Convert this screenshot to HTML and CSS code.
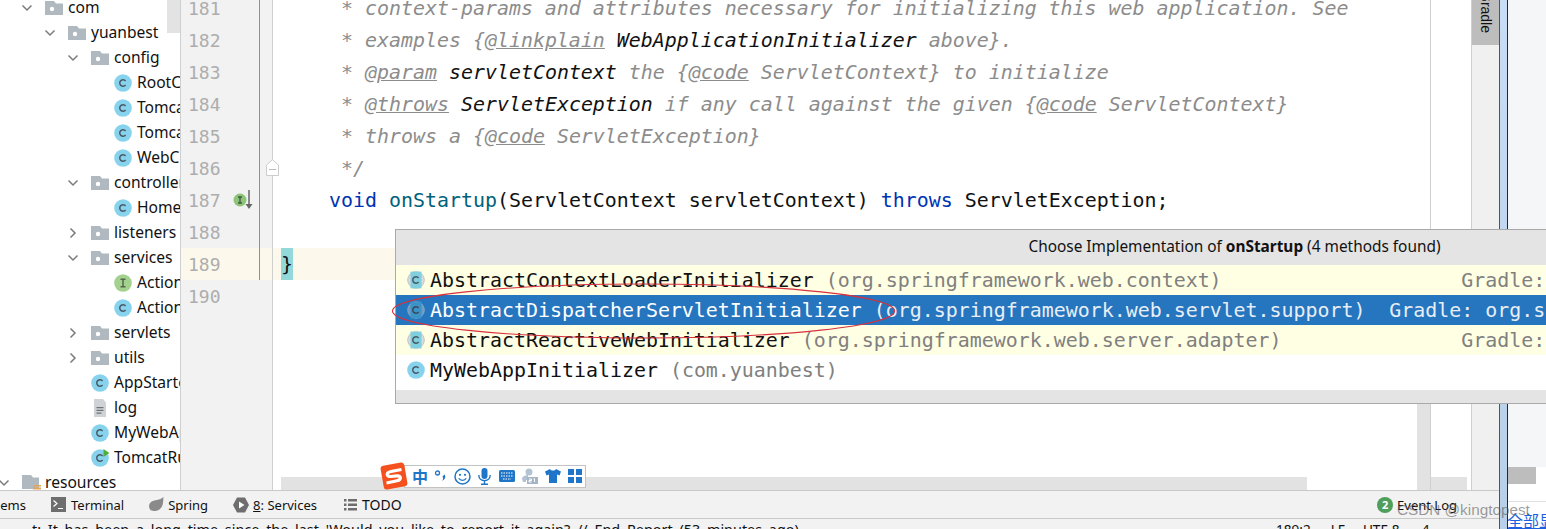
FILE: index.html
```html
<!DOCTYPE html>
<html lang="en">
<head>
<meta charset="utf-8">
<title>IDE</title>
<link rel="stylesheet" href="styles.css">
</head>
<body>
<svg class="defs" width="0" height="0" aria-hidden="true">
  <symbol id="down" viewBox="0 0 12 8"><path d="M1.500 1.500 6 6l4.500-4.500" fill="none" stroke="#7b7b7b" stroke-width="1.500"/></symbol>
  <symbol id="right" viewBox="0 0 8 12"><path d="M1.500 1.500 6 6l-4.500 4.500" fill="none" stroke="#7b7b7b" stroke-width="1.500"/></symbol>
  <symbol id="folder" viewBox="0 0 18 14"><path d="M0 0h9l2 2.500h7V14H0z" fill="#b0b9c0"/><circle cx="7" cy="8" r="2.200" fill="#fff"/></symbol>
  <symbol id="res" viewBox="0 0 19 16"><path d="M0 0h9l2 2.500h6V14H0z" fill="#b0b9c0"/><path d="M11 10h8v1.600h-8zM11 12.400h8V14h-8zM11 14.600h8V16h-8z" fill="#e5a55a"/></symbol>
  <symbol id="cls" viewBox="0 0 18 18"><circle cx="9" cy="9" r="8.800" fill="#87d3ee"/><path d="M11.600 6.900a3.300 3.300 0 1 0 0 4.200" fill="none" stroke="#4a5a66" stroke-width="1.500"/></symbol>
  <symbol id="lib" viewBox="0 0 18 18"><circle cx="9" cy="9" r="8.300" fill="#d8dde0" stroke="#c2c2c2"/><rect x="3.500" y="0.600" width="11" height="16.800" fill="#7fcfdf"/><path d="M11.600 6.900a3.300 3.300 0 1 0 0 4.200" fill="none" stroke="#4a5a66" stroke-width="1.500"/></symbol>
  <symbol id="libsel" viewBox="0 0 18 18"><circle cx="9" cy="9" r="8.300" fill="#6d9cc4" stroke="#8aa4bb"/><rect x="3.500" y="0.600" width="11" height="16.800" fill="#3b93c8"/><path d="M11.600 6.900a3.300 3.300 0 1 0 0 4.200" fill="none" stroke="#39495a" stroke-width="1.500"/></symbol>
  <symbol id="ifc" viewBox="0 0 18 18"><circle cx="9" cy="9" r="8.800" fill="#a3d28f"/><path d="M6.500 5.300h5M6.500 12.700h5M9 5.300v7.400" fill="none" stroke="#55654f" stroke-width="1.500"/></symbol>
</svg>
<div class="ide">
  <div class="main">
    <nav class="tree">
      <div class="tree-thumb"></div>
      <div class="row d0"><svg class="chev"><use href="#down"/></svg><svg class="fold"><use href="#folder"/></svg><span>com</span></div>
      <div class="row d1"><svg class="chev"><use href="#down"/></svg><svg class="fold"><use href="#folder"/></svg><span>yuanbest</span></div>
      <div class="row d2"><svg class="chev"><use href="#down"/></svg><svg class="fold"><use href="#folder"/></svg><span>config</span></div>
      <div class="row d3 leaf"><svg class="ci"><use href="#cls"/></svg><span>RootConfig</span></div>
      <div class="row d3 leaf"><svg class="ci"><use href="#cls"/></svg><span>TomcatConfig</span></div>
      <div class="row d3 leaf"><svg class="ci"><use href="#cls"/></svg><span>TomcatServer</span></div>
      <div class="row d3 leaf"><svg class="ci"><use href="#cls"/></svg><span>WebConfig</span></div>
      <div class="row d2"><svg class="chev"><use href="#down"/></svg><svg class="fold"><use href="#folder"/></svg><span>controllers</span></div>
      <div class="row d3 leaf"><svg class="ci"><use href="#cls"/></svg><span>HomeController</span></div>
      <div class="row d2"><svg class="chev chev-r"><use href="#right"/></svg><svg class="fold"><use href="#folder"/></svg><span>listeners</span></div>
      <div class="row d2"><svg class="chev"><use href="#down"/></svg><svg class="fold"><use href="#folder"/></svg><span>services</span></div>
      <div class="row d3 leaf"><svg class="ci"><use href="#ifc"/></svg><span>ActionService</span></div>
      <div class="row d3 leaf"><svg class="ci"><use href="#cls"/></svg><span>ActionServiceImpl</span></div>
      <div class="row d2"><svg class="chev chev-r"><use href="#right"/></svg><svg class="fold"><use href="#folder"/></svg><span>servlets</span></div>
      <div class="row d2"><svg class="chev chev-r"><use href="#right"/></svg><svg class="fold"><use href="#folder"/></svg><span>utils</span></div>
      <div class="row d2 leaf"><svg class="ci"><use href="#cls"/></svg><span>AppStarter</span></div>
      <div class="row d2 leaf"><svg class="ci" viewBox="0 0 18 18"><path d="M3 0h9l3 3.500V18H3z" fill="#d0d3d6"/><path d="M5.500 8h7v1.300h-7zM5.500 10.700h7V12h-7zM5.500 13.400h5v1.300h-5z" fill="#6c7378"/></svg><span>log</span></div>
      <div class="row d2 leaf"><svg class="ci"><use href="#cls"/></svg><span>MyWebAppInitializer</span></div>
      <div class="row d2 leaf"><svg class="ci" viewBox="0 0 18 18"><use href="#cls" width="18" height="18"/><path d="M12.500 0v8l6-4z" fill="#4fae3a"/></svg><span>TomcatRunner</span></div>
      <div class="row dm"><svg class="chev"><use href="#down"/></svg><svg class="fold fold-res"><use href="#res"/></svg><span>resources</span></div>
    </nav>
    <div class="gutter">
      <div class="gline"><div class="num">181</div></div>
      <div class="gline"><div class="num">182</div></div>
      <div class="gline"><div class="num">183</div></div>
      <div class="gline"><div class="num">184</div></div>
      <div class="gline"><div class="num">185</div></div>
      <div class="gline"><div class="num">186</div></div>
      <div class="gline"><div class="num">187</div></div>
      <div class="gline"><div class="num">188</div></div>
      <div class="gline cur"><div class="num">189</div></div>
      <div class="gline"><div class="num last">190</div></div>
      <svg class="impl" width="21" height="20" viewBox="0 0 21 20"><circle cx="7" cy="10" r="6.500" fill="#8cc57a"/><path d="M5 7h4M5 13h4M7 7v6" stroke="#45553f" stroke-width="1.300" fill="none"/><path d="M16 0v15" stroke="#666" stroke-width="1.500"/><path d="M12.500 14h7L16 19z" fill="#666"/></svg>
      <svg class="foldmark" width="13" height="17" viewBox="0 0 13 17"><path d="M.5 16.500V6L6.500.7 12.500 6v10.500z" fill="#fff" stroke="#ccc"/><path d="M3 10.500h7" stroke="#bbb"/></svg>
    </div>
    <div class="editor">
      <div class="code"><span class="doc">     * context-params and attributes necessary for initializing this web application. See</span></div>
      <div class="code"><span class="doc">     * examples {<span class="tag">@linkplain</span> </span><span class="ref">WebApplicationInitializer</span><span class="doc"> above}.</span></div>
      <div class="code"><span class="doc">     * <span class="tag">@param</span> </span><span class="ref">servletContext</span><span class="doc"> the {<span class="tag">@code</span> ServletContext} to initialize</span></div>
      <div class="code"><span class="doc">     * <span class="tag">@throws</span> </span><span class="ref">ServletException</span><span class="doc"> if any call against the given {<span class="tag">@code</span> ServletContext}</span></div>
      <div class="code"><span class="doc">     * throws a {<span class="tag">@code</span> ServletException}</span></div>
      <div class="code"><span class="doc">     */</span></div>
      <div class="code">    <span class="kw">void</span> <span class="fn">onStartup</span>(ServletContext servletContext) <span class="kw">throws</span> ServletException;</div>
      <div class="code"></div>
      <div class="code cur"><span class="brace">}</span></div>
      <div class="code"></div>
      <div class="hscroll"></div>
      <div class="vscroll"></div>
    </div>
    <div class="aux"><div class="aux-thumb"></div></div>
    <aside class="strip"><div class="gradle"><span>Gradle</span></div></aside>
  </div>
  <footer class="toolbar">
    <span class="tool cut">Problems</span>
    <span class="tool t-term"><svg width="15" height="15" viewBox="0 0 15 15"><rect width="15" height="15" fill="#6e6e6e"/><path d="M2.500 3.500 6 6.500l-3.500 3M7 11.500h5" fill="none" stroke="#fff" stroke-width="1.200"/></svg>Terminal</span>
    <span class="tool t-spring"><svg width="16" height="15" viewBox="0 0 16 15"><path d="M15.500 0C15 5 15.500 9 12 12c-3 2.500-7 2.500-9.500 1C1 11 0 8 3 5c3-2.500 9-1.500 12.500-5zM2 14c2-4 5-6 9-7.500" fill="#8a8a8a"/></svg>Spring</span>
    <span class="tool t-serv"><svg width="16" height="16" viewBox="0 0 16 16"><path d="M4 .5h8L16 8l-4 7.500H4L0 8z" fill="#6e6e6e"/><path d="M6 4.500v7l5.500-3.500z" fill="#fff"/></svg><span><u>8</u>: Services</span></span>
    <span class="tool t-todo"><svg width="13" height="12" viewBox="0 0 13 12"><path d="M0 0h2.500v2.500H0zM4 0h9v2.500H4zM0 4.500h2.500V7H0zM4 4.500h9V7H4zM0 9h2.500v2.500H0zM4 9h9v2.500H4z" fill="#6e6e6e"/></svg><span class="todo-label">TODO</span></span>
    <span class="tool t-log"><i class="badge">2</i>Event Log</span>
  </footer>
  <div class="status">
    <span class="msg">t: It has been a long time since the last 'Would you like to report it again? // End Report (53 minutes ago)</span>
    <span class="pos">189:2</span><span class="pos lf">LF</span><span class="pos utf">UTF-8</span><span class="pos ind">4</span>
  </div>
</div>
<div class="frame"></div>
<div class="far">
  <div class="far-top"></div>
  <div class="far-bar"><div class="far-thumb"></div></div>
  <div class="far-line"></div>
  <a class="far-link">全部显示</a>
</div>

<section class="popup">
  <header class="pop-head">Choose Implementation of <b>onStartup</b> (4 methods found)</header>
  <div class="item lib"><svg class="ci"><use href="#lib"/></svg><span class="name">AbstractContextLoaderInitializer</span> <span class="pkg">(org.springframework.web.context)</span><span class="loc">Gradle: org.springframework:spring-web:5.2.8</span></div>
  <div class="item sel"><svg class="ci"><use href="#libsel"/></svg><span class="name">AbstractDispatcherServletInitializer</span> <span class="pkg">(org.springframework.web.servlet.support)</span><span class="loc">Gradle: org.springframework:spring-webmvc:5.2.8.RC</span></div>
  <div class="item lib"><svg class="ci"><use href="#lib"/></svg><span class="name">AbstractReactiveWebInitializer</span> <span class="pkg">(org.springframework.web.server.adapter)</span><span class="loc">Gradle: org.springframework:spring-web:5.2.8</span></div>
  <div class="item"><svg class="ci"><use href="#cls"/></svg><span class="name">MyWebAppInitializer</span> <span class="pkg">(com.yuanbest)</span></div>
  <div class="pop-foot"></div>
</section>

<svg class="ring" width="510" height="62" viewBox="0 0 510 62"><ellipse cx="253.500" cy="31" rx="251" ry="27" fill="none" stroke="#d8303c" stroke-width="1.100"/></svg>

<div class="ime">
  <svg class="ime-logo" width="28" height="28" viewBox="0 0 28 28"><rect x="2" y="2" width="24" height="24" rx="3" fill="#f4511e" transform="rotate(-10 14 14)"/><path d="M21.500 7.500 11 9.500C6 10.500 6 14.500 10.500 14.500L17 13.800C21.500 13.500 21.500 17.800 17 18.800L6.500 21" fill="none" stroke="#fff" stroke-width="3.200"/></svg>
  <div class="ime-bar">
    <span class="ime-zh">中</span>
    <svg width="12" height="14" viewBox="0 0 12 14"><circle cx="2.500" cy="4" r="2" fill="none" stroke="#1f76c8" stroke-width="1.300"/><path d="M9.500 5.500c1.500 1.500 1 5-2.500 6.500 1.500-2 1.200-3 .5-4.500z" fill="#1f76c8"/></svg>
    <svg width="17" height="17" viewBox="0 0 17 17"><circle cx="8.500" cy="8.500" r="7.500" fill="none" stroke="#1f76c8" stroke-width="1.500"/><circle cx="6" cy="6.800" r="1.100" fill="#1f76c8"/><circle cx="11" cy="6.800" r="1.100" fill="#1f76c8"/><path d="M4.800 10.200c1.500 2.800 6 2.800 7.400 0" fill="none" stroke="#1f76c8" stroke-width="1.300"/></svg>
    <svg width="13" height="17" viewBox="0 0 13 17"><rect x="3.500" y="0" width="6" height="11" rx="3" fill="#1f76c8"/><path d="M.8 7c0 7.500 11.400 7.500 11.400 0M6.500 12.500V16M3 16.300h7" fill="none" stroke="#1f76c8" stroke-width="1.400"/></svg>
    <svg width="16" height="12" viewBox="0 0 16 12"><rect width="16" height="12" rx="1.500" fill="#1f76c8"/><path d="M2 3h12M2 6h12M4 9h8" stroke="#fff" stroke-width="1.200" stroke-dasharray="1.500 1"/></svg>
    <svg width="16" height="16" viewBox="0 0 16 16"><circle cx="7" cy="4" r="3.500" fill="#b4c3d3"/><path d="M0 11c0-3 4-4 6-4v5H4v2H1z" fill="#b4c3d3"/><rect x="5" y="9" width="11" height="7" fill="#a5b4c4"/><path d="M7 11h2.500v1.500H7V14h2.500M11.500 11l1-.5V14" fill="none" stroke="#fff"/></svg>
    <svg width="16" height="14" viewBox="0 0 16 14"><path d="M5 0 0 2.500l1.500 4L4 5.500V14h8V5.500l2.500 1 1.500-4L11 0C10 2 6 2 5 0z" fill="#1f76c8"/></svg>
    <svg width="14" height="14" viewBox="0 0 14 14"><path d="M0 0h6v6H0zM8 0h6v6H8zM0 8h6v6H0zM8 8h6v6H8z" fill="#1f76c8"/></svg>
  </div>
</div>
<div class="watermark">CSDN @kingtopest</div>
</body>
</html>
```
FILE: styles.css
```css
html, body { margin: 0; padding: 0; height: 529px; overflow: hidden; background: #fff; }
body { display: flex; width: 1546px; position: relative; font-family: "Noto Sans", "Open Sans", sans-serif; color: #111; }
.defs { position: absolute; }

.ide { width: 1499px; height: 529px; display: flex; flex-direction: column; overflow: hidden; flex: none; }
.main { height: 490px; display: flex; flex: none; overflow: hidden; }

/* project tree */
.tree { width: 180px; flex: none; overflow: hidden; position: relative; border-right: 1px solid #cfcfcf; font-size: 15.6px; }
.tree-thumb { position: absolute; left: 167px; top: 0; width: 13px; height: 33px; background: #e3e3e3; }
.row { height: 25px; display: flex; align-items: center; white-space: nowrap; }
.row span { margin-top: -2px; }
.tree-thumb + .row { margin-top: -5px; }
.d0 { padding-left: 21px; }
.d1 { padding-left: 44px; }
.d2 { padding-left: 67px; }
.d3 { padding-left: 90px; }
.dm { padding-left: 0; margin-left: -2px; }
.d2.leaf { padding-left: 91px; }
.d3.leaf { padding-left: 114px; }
.chev { width: 12px; height: 8px; margin-right: 12px; flex: none; }
.chev-r { width: 8px; height: 12px; margin-left: 2px; margin-right: 14px; }
.fold { width: 18px; height: 14px; margin-right: 5px; flex: none; }
.fold-res { width: 19px; height: 16px; margin-right: 4px; }
.ci { width: 18px; height: 18px; margin-right: 5px; flex: none; }

/* gutter */
.gutter { width: 91px; flex: none; background: #f2f2f2; border-right: 1px solid #cfcfcf; position: relative; margin-top: -8px; }
.gline { height: 32px; }
.gline.cur { background: #fcf9ec; }
.num { width: 71px; height: 32px; padding-left: 7px; border-right: 1px solid #6f9e9e; font: 18px/34px "DejaVu Sans Mono", monospace; color: #adadad; }
.num.last { border-right-color: transparent; }
.impl { position: absolute; left: 52px; top: 198px; }
.foldmark { position: absolute; left: 85px; top: 167px; }

/* editor */
.editor { width: 1157px; flex: none; position: relative; margin-top: -8px; border-right: 1px solid #cfcfcf; }
.code { height: 32px; padding-left: 8px; font: 19.93px/34px "DejaVu Sans Mono", monospace; white-space: pre; color: #111; }
.code.cur { background: #fcf9ec; }
.brace { background: #93d9d9; display: inline-block; width: 12px; height: 32px; }
.doc { color: #8c8c8c; font-style: italic; }
.tag { text-decoration: underline; }
.ref { color: #111; font-style: italic; }
.kw { color: #0033b3; }
.fn { color: #00627a; }
.hscroll { position: absolute; left: 8px; width: 1026px; top: 485px; height: 13px; background: #e2e2e2; }
.vscroll { position: absolute; left: 1144px; width: 13px; top: 300px; height: 198px; background: #e2e2e2; }
.aux { width: 40px; flex: none; position: relative; border-right: 1px solid #cfcfcf; }
.aux-thumb { position: absolute; left: 0; width: 36px; top: 477px; height: 13px; background: #e2e2e2; }
.strip { width: 27px; flex: none; background: #f0f0f0; }
.gradle { height: 45px; background: #bdbdbd; display: flex; flex-direction: column; justify-content: flex-end; align-items: center; overflow: hidden; }
.gradle span { writing-mode: vertical-rl; font: 14px "Liberation Sans", sans-serif; padding-bottom: 12px; }

/* tool windows bar */
.toolbar { height: 27px; flex: none; background: #f2f2f2; border-top: 1px solid #c9c9c9; border-bottom: 1px solid #c9c9c9; display: flex; align-items: center; font-size: 13px; box-sizing: content-box; }
.tool { display: inline-flex; align-items: center; gap: 5px; white-space: nowrap; }
.cut { margin-left: -32px; width: 57px; flex: none; }
.t-term { margin-left: 26px; }
.t-spring { margin-left: 24px; gap: 4px; }
.t-serv { margin-left: 25px; gap: 4px; }
.t-todo { margin-left: 27px; }
.todo-label { font-size: 14px; }
.t-log { margin-left: auto; margin-right: 42px; gap: 4px; }
.badge { width: 16px; height: 16px; border-radius: 50%; background: #4f9e5c; color: #fff; font: 700 11px/16px "Noto Sans", sans-serif; text-align: center; }

/* status bar */
.status { flex: 1; background: #f2f2f2; display: flex; font-size: 13.6px; line-height: 22px; white-space: nowrap; position: relative; }
.msg { margin-left: 32px; width: 1244px; flex: none; font-size: 14.4px; word-spacing: 3px; }
.pos { flex: none; }
.lf { margin-left: 20px; }
.utf { margin-left: 18px; }
.ind { margin-left: 22px; }

/* window frame + page behind */
.frame { width: 7px; flex: none; background: linear-gradient(#c8ddf5, #b7cfe8); border-left: 1px solid #4b5563; border-right: 1px solid #23282e; }
.far { flex: 1; background: #fff; display: flex; flex-direction: column; position: relative; overflow: hidden; }
.far-top { height: 467px; flex: none; background: #f5f6f8; }
.far-bar { height: 17px; flex: none; }
.far-thumb { width: 28px; height: 17px; background: #bdbdbd; }
.far-line { height: 1px; margin-top: 17px; background: #e2e2e2; flex: none; }
.far-link { color: #1c5fe0; text-decoration: underline; font: 16px/20px "Noto Sans CJK SC", sans-serif; white-space: nowrap; margin-top: 8px; margin-left: -1px; }

/* popup */
.popup { position: absolute; left: 395px; top: 229px; width: 1679px; height: 175px; background: #fff; border: 1px solid #a9a9a9; box-sizing: border-box; display: flex; flex-direction: column; }
.pop-head { height: 35px; flex: none; background: #e4e4e4; text-align: center; font-size: 15.4px; line-height: 33px; color: #111; }
.item { height: 30px; flex: none; display: flex; align-items: center; padding-left: 11px; padding-right: 84px; font: 19.93px/30px "DejaVu Sans Mono", monospace; white-space: pre; }
.lib { background: #ffffe4; }
.sel { background: #2675bf; color: #fff; }
.item .ci { margin-right: 5px; }
.item span { padding-top: 2px; }
.pkg, .loc { color: #808080; }
.name + .pkg { margin-left: 12px; }
.sel .pkg, .sel .loc { color: #e8eef5; }
.loc { margin-left: auto; }
.pop-foot { margin-top: auto; height: 13px; background: #e4e4e4; flex: none; }

.ring { position: absolute; left: 390px; top: 280px; }

/* IME bar */
.ime { position: absolute; left: 380px; top: 462px; display: flex; align-items: center; }
.ime-logo { margin-right: -4px; position: relative; z-index: 1; flex: none; }
.ime-bar { width: 182px; height: 23px; box-sizing: border-box; padding: 0 3px 0 7px; background: #fff; border: 1px solid #c3c3c3; display: flex; align-items: center; justify-content: space-between; }
.ime-zh { color: #1f76c8; font: 700 16px/20px "Noto Sans CJK SC", sans-serif; }

.watermark { position: absolute; left: 1397px; top: 500px; font: 15.3px/20px "Liberation Sans", sans-serif; color: rgba(90, 90, 90, .6); white-space: nowrap; }
```
